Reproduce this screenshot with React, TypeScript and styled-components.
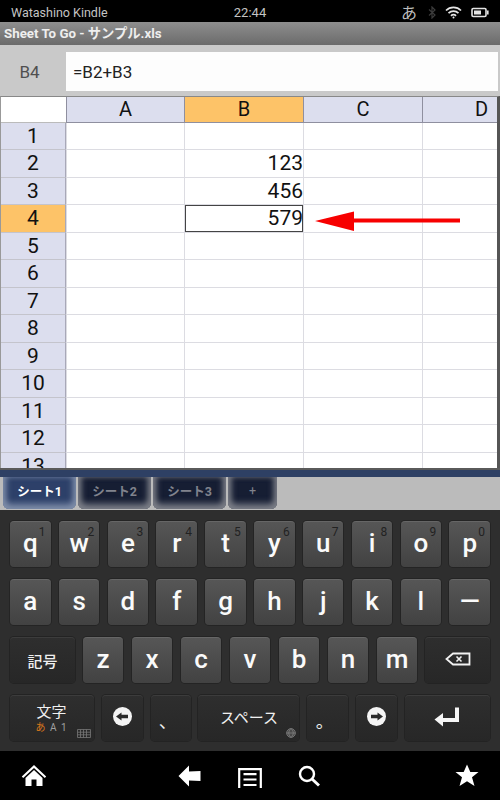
import React from 'react'
import styled, { createGlobalStyle } from 'styled-components'

const cols = ['A', 'B', 'C', 'D']
const rows = [1, 2, 3, 4, 5, 6, 7, 8, 9, 10, 11, 12, 13]
const values: Record<number, string> = { 2: '123', 3: '456', 4: '579' }

const numberRow = ['q', 'w', 'e', 'r', 't', 'y', 'u', 'i', 'o', 'p']
const hints = ['1', '2', '3', '4', '5', '6', '7', '8', '9', '0']
const homeRow = ['a', 's', 'd', 'f', 'g', 'h', 'j', 'k', 'l', '—']
const bottomRow = ['z', 'x', 'c', 'v', 'b', 'n', 'm']

export default function App() {
  return (
    <Screen>
      <GlobalStyle />
      <StatusBar>
        <DeviceName>Watashino Kindle</DeviceName>
        <Clock>22:44</Clock>
        <StatusIcons>
          <ImeGlyph>あ</ImeGlyph>
          <svg width="8" height="13" viewBox="0 0 8 13" fill="none" stroke="#3c3c3c" strokeWidth="1.2">
            <path d="M1 3.5l6 5.5-3 3V1l3 3-6 5.5" />
          </svg>
          <svg width="17" height="13" viewBox="0 0 17 13" fill="none" stroke="#e4e4e4" strokeWidth="1.7">
            <path d="M1 4.5a10.5 10.5 0 0 1 15 0M3.5 7.2a7 7 0 0 1 10 0M6 9.8a3.4 3.4 0 0 1 5 0" />
            <circle cx="8.5" cy="11.6" r="1" fill="#e4e4e4" stroke="none" />
          </svg>
          <svg width="18" height="11" viewBox="0 0 18 11">
            <rect x="1" y="1.5" width="14" height="8" rx="1.2" fill="none" stroke="#e4e4e4" strokeWidth="1.6" />
            <rect x="3" y="3.5" width="7" height="4" fill="#e4e4e4" />
            <rect x="16" y="3.5" width="1.6" height="4" fill="#e4e4e4" />
          </svg>
        </StatusIcons>
      </StatusBar>

      <TitleBar>Sheet To Go - サンプル.xls</TitleBar>

      <FormulaBar>
        <CellName>B4</CellName>
        <FormulaInput>=B2+B3</FormulaInput>
      </FormulaBar>

      <Sheet>
        <HeaderRow>
          <Corner />
          {cols.map((c) => (
            <ColHeader key={c} $active={c === 'B'} $last={c === 'D'}>{c}</ColHeader>
          ))}
        </HeaderRow>
        {rows.map((r) => (
          <Row key={r}>
            <RowHeader $active={r === 4}>{r}</RowHeader>
            {cols.map((c) => (
              <Cell key={c} $selected={c === 'B' && r === 4}>
                {c === 'B' ? values[r] : ''}
              </Cell>
            ))}
          </Row>
        ))}
        <Callout width="146" height="24" viewBox="0 0 146 24">
          <path d="M0 12L39 2.500V9.500H145V13.500H39V22Z" fill="#f70000" />
        </Callout>
      </Sheet>

      <SheetDivider />

      <TabStrip>
        <Tab $active>シート1</Tab>
        <Tab>シート2</Tab>
        <Tab>シート3</Tab>
        <AddTab>+</AddTab>
      </TabStrip>

      <Keyboard>
        <KeyRow>
          {numberRow.map((k, i) => (
            <LetterKey key={k}>
              <Hint>{hints[i]}</Hint>
              {k}
            </LetterKey>
          ))}
        </KeyRow>
        <KeyRow>
          {homeRow.map((k) => (
            <LetterKey key={k}>{k}</LetterKey>
          ))}
        </KeyRow>
        <KeyRow>
          <FuncKey $width={65}><SymbolLabel>記号</SymbolLabel></FuncKey>
          <Letters>
            {bottomRow.map((k) => (
              <LetterKey key={k}>{k}</LetterKey>
            ))}
          </Letters>
          <FuncKey $width={65}>
            <svg width="26" height="14" viewBox="0 0 26 14">
              <path d="M8 1.500H24.500V12.500H8L1.500 7Z" fill="none" stroke="#f2f2f2" strokeWidth="1.800" />
              <path d="M11.500 4.500l5 5M16.500 4.500l-5 5" stroke="#f2f2f2" strokeWidth="1.600" />
            </svg>
          </FuncKey>
        </KeyRow>
        <KeyRow>
          <FuncKey $width={84}>
            <ModeStack>
              <ModeLabel>文字</ModeLabel>
              <ModeSub><Hira>あ</Hira> A 1</ModeSub>
            </ModeStack>
            <KeyCorner width="14" height="9" viewBox="0 0 14 9" fill="none" stroke="#777" strokeWidth="0.8">
              <path d="M.5.500h13v8H.500zM.5 3.200h13M.5 5.800h13M3.500.500v8M6.500.500v8M9.500.500v8" />
            </KeyCorner>
          </FuncKey>
          <FuncKey $width={41}>
            <svg width="19" height="19" viewBox="0 0 19 19">
              <circle cx="9.500" cy="9.500" r="9.500" fill="#f4f4f4" />
              <path d="M3 9.500L8.500 5.500V7.800H15V11.200H8.500V13.500Z" fill="#2a2a2a" />
            </svg>
          </FuncKey>
          <FuncKey $width={40}><PunctLabel>、</PunctLabel></FuncKey>
          <FuncKey $width={101}>
            <SpaceLabel>スペース</SpaceLabel>
            <KeyCorner width="10" height="10" viewBox="0 0 10 10" fill="none" stroke="#808080" strokeWidth="0.8">
              <circle cx="5" cy="5" r="4.400" fill="#4a4a4a" />
              <path d="M.6 5h8.800M5 .6c-3 2.800-3 6 0 8.800M5 .6c3 2.800 3 6 0 8.800" />
            </KeyCorner>
          </FuncKey>
          <FuncKey $width={41}><PunctLabel>。</PunctLabel></FuncKey>
          <FuncKey $width={41}>
            <svg width="19" height="19" viewBox="0 0 19 19">
              <circle cx="9.500" cy="9.500" r="9.500" fill="#f4f4f4" />
              <path d="M16 9.500L10.500 5.500V7.800H4V11.200H10.500V13.500Z" fill="#2a2a2a" />
            </svg>
          </FuncKey>
          <FuncKey $width={85}>
            <svg width="26" height="20" viewBox="0 0 26 20">
              <path d="M25 0.500V15H9V19.500L0.500 12.500L9 6V11H21V0.500Z" fill="#f6f6f6" />
            </svg>
          </FuncKey>
        </KeyRow>
      </Keyboard>

      <NavBar>
        <svg width="26" height="23" viewBox="0 0 26 23">
          <path d="M13 1L0.800 12.500L2.200 14L13 4L23.800 14L25.200 12.500Z" fill="#fff" />
          <path d="M4.500 14L13 6L21.500 14V22H15.500V15.500H10.500V22H4.500Z" fill="#fff" />
        </svg>
        <NavCluster>
          <svg width="24" height="22" viewBox="0 0 24 22">
            <path d="M0.500 11L11 0.500V6.500L22.500 6V16L11 15.500V21.500Z" fill="#fff" />
          </svg>
          <MenuIcon width="24" height="20" viewBox="0 0 24 20" fill="none" stroke="#fff" strokeWidth="2.200">
            <path d="M1.200 20V1.200H22.800V20" />
            <path d="M5.500 6.200H18.500M5.500 11.500H18.500M5.500 17H18.500" />
          </MenuIcon>
          <svg width="22" height="22" viewBox="0 0 22 22" fill="none" stroke="#fff">
            <circle cx="9" cy="9" r="7" strokeWidth="2.400" />
            <path d="M14 14L21 20.500" strokeWidth="3" />
          </svg>
        </NavCluster>
        <svg width="24" height="23" viewBox="0 0 24 23">
          <path d="M12 0.500L15.300 8H23.500L17 13.300L19.500 22L12 17.200L4.500 22L7 13.300L0.500 8H8.700Z" fill="#fff" />
        </svg>
      </NavBar>
    </Screen>
  )
}

const GlobalStyle = createGlobalStyle`
  html, body {
    margin: 0;
    padding: 0;
    background: #000;
  }
  * {
    box-sizing: border-box;
  }
`

const Screen = styled.div`
  width: 500px;
  height: 800px;
  overflow: hidden;
  display: flex;
  flex-direction: column;
  font-family: Roboto, "Liberation Sans", "Noto Sans CJK JP", sans-serif;
`

const StatusBar = styled.div`
  height: 22px;
  flex: none;
  background: #000;
  color: #c4c4c4;
  display: grid;
  grid-template-columns: 1fr auto 1fr;
  align-items: center;
  padding: 0 11px;
  font-size: 12.500px;
`

const DeviceName = styled.span``

const Clock = styled.span`
  font-size: 13px;
`

const StatusIcons = styled.div`
  display: flex;
  align-items: center;
  justify-content: flex-end;
  gap: 9px;
`

const ImeGlyph = styled.span`
  font-size: 16px;
  color: #bdbdbd;
  margin-right: 2px;
`

const TitleBar = styled.div`
  height: 23px;
  flex: none;
  background: linear-gradient(#8e8e8e, #6b6b6b);
  color: #eee;
  font-size: 13.300px;
  font-weight: 700;
  line-height: 23px;
  padding-left: 4px;
`

const FormulaBar = styled.div`
  height: 51px;
  flex: none;
  display: flex;
  background: #c9c9c9;
  padding: 7px 2px 5px 0;
`

const CellName = styled.div`
  width: 65px;
  flex: none;
  display: flex;
  align-items: center;
  justify-content: center;
  color: #4f4f4f;
  font-size: 17px;
  padding-right: 6px;
`

const FormulaInput = styled.div`
  flex: 1;
  margin-left: 1px;
  background: #fdfdfd;
  color: #222;
  font-size: 17px;
  display: flex;
  align-items: center;
  padding-left: 7px;
`

const Sheet = styled.div`
  position: relative;
  height: 372px;
  flex: none;
  background: #fff;
  overflow: hidden;
  border-right: 3px solid #555;
  border-top: 1px solid #888;
  border-left: 1px solid #999;
`

const HeaderRow = styled.div`
  display: grid;
  grid-template-columns: 65px 118px 119px 119px 75px;
  height: 25.500px;
`

const Corner = styled.div`
  border-bottom: 1px solid #bbb;
`

const ColHeader = styled.div<{ $active?: boolean; $last?: boolean }>`
  display: flex;
  align-items: center;
  justify-content: ${(p) => (p.$last ? 'flex-end' : 'center')};
  padding-right: ${(p) => (p.$last ? '9px' : '0')};
  background: ${(p) => (p.$active ? '#fdc368' : '#dcdeee')};
  border-left: 1px solid #8f8f9f;
  border-bottom: 1px solid #8f8f9f;
  color: #111;
  font-size: 20px;
`

const Row = styled.div`
  display: grid;
  grid-template-columns: 65px 118px 119px 119px 75px;
  height: 27.500px;
`

const RowHeader = styled.div<{ $active?: boolean }>`
  display: flex;
  align-items: center;
  justify-content: center;
  background: ${(p) => (p.$active ? '#fdc368' : '#dcdeee')};
  border-bottom: 1px solid #c4c4cc;
  border-right: 1px solid #a8a8b8;
  color: #111;
  font-size: 21px;
`

const Cell = styled.div<{ $selected?: boolean }>`
  display: flex;
  align-items: center;
  justify-content: flex-end;
  border-left: 1px solid #dcdce2;
  border-bottom: 1px solid #dcdce2;
  box-shadow: ${(p) => (p.$selected ? 'inset 0 0 0 1px #444' : 'none')};
  color: #111;
  font-size: 21px;
`

const Callout = styled.svg`
  position: absolute;
  left: 314px;
  top: 112px;
`

const SheetDivider = styled.div`
  height: 9px;
  flex: none;
  background: #2e4064;
  border-top: 2px solid #5a5a5a;
`

const TabStrip = styled.div`
  height: 33px;
  flex: none;
  background: #bbb;
  display: flex;
  gap: 2px;
  padding-left: 3px;
`

const Tab = styled.div<{ $active?: boolean }>`
  width: 73px;
  height: 32px;
  border-radius: 0 0 6px 6px;
  display: flex;
  align-items: center;
  justify-content: center;
  background: ${(p) => (p.$active ? '#2d4069' : '#161e33')};
  box-shadow: inset 0 -6px 7px -1px ${(p) => (p.$active ? '#7d8ca8' : '#7a7d86')},
    inset 5px 0 6px -2px ${(p) => (p.$active ? '#7d8ca8' : '#7a7d86')},
    inset -5px 0 6px -2px ${(p) => (p.$active ? '#7d8ca8' : '#7a7d86')};
  color: ${(p) => (p.$active ? '#fff' : '#80838d')};
  font-size: 12.500px;
  font-weight: 700;
  padding-bottom: 6px;
`

const AddTab = styled(Tab)`
  width: 49px;
  font-weight: 400;
`

const Keyboard = styled.div`
  height: 241px;
  flex: none;
  background: #2e2e2e;
  display: flex;
  flex-direction: column;
  gap: 12px;
  padding: 11px 10px 0;
`

const KeyRow = styled.div`
  display: flex;
  justify-content: space-between;
  height: 46px;
`

const Letters = styled.div`
  display: flex;
  gap: 8.500px;
  margin: 0 1px;
`

const LetterKey = styled.div`
  position: relative;
  width: 40.500px;
  height: 46px;
  border-radius: 4px;
  background: linear-gradient(#565656, #424242);
  border-top: 1px solid #666;
  box-shadow: 0 0 0 1px #242424;
  display: flex;
  align-items: center;
  justify-content: center;
  color: #fafafa;
  font-size: 26px;
  font-weight: 500;
  padding-bottom: 3px;
`

const Hint = styled.span`
  position: absolute;
  top: 3px;
  right: 5px;
  color: #222;
  font-size: 12px;
  font-weight: 400;
`

const FuncKey = styled.div<{ $width: number }>`
  position: relative;
  width: ${(p) => p.$width}px;
  height: 46px;
  border-radius: 4px;
  background: linear-gradient(#2e2e2e, #272727);
  border-top: 1px solid #3c3c3c;
  box-shadow: 0 0 0 1px #232323;
  display: flex;
  align-items: center;
  justify-content: center;
  color: #f0f0f0;
  padding-bottom: 4px;
`

const SymbolLabel = styled.span`
  font-size: 15px;
  font-weight: 500;
  margin-top: 4px;
`

const ModeStack = styled.div`
  display: flex;
  flex-direction: column;
  align-items: center;
  margin: 4px 1px 0 0;
`

const ModeLabel = styled.span`
  font-size: 15px;
  line-height: 17px;
`

const ModeSub = styled.span`
  font-size: 10px;
  line-height: 13px;
  color: #a0a0a0;
  letter-spacing: 1px;
`

const Hira = styled.span`
  color: #d9771c;
`

const KeyCorner = styled.svg`
  position: absolute;
  right: 3px;
  bottom: 3px;
`

const PunctLabel = styled.span`
  font-size: 18px;
  margin-right: 6px;
  padding-top: 6px;
`

const SpaceLabel = styled.span`
  font-size: 15px;
`

const NavBar = styled.div`
  height: 49px;
  flex: none;
  background: #000;
  display: flex;
  align-items: center;
  justify-content: space-between;
  padding: 0 21px;
`

const NavCluster = styled.div`
  display: flex;
  align-items: center;
  gap: 36px;
  margin-right: 4px;
`

const MenuIcon = styled.svg`
  margin-top: 4px;
`
